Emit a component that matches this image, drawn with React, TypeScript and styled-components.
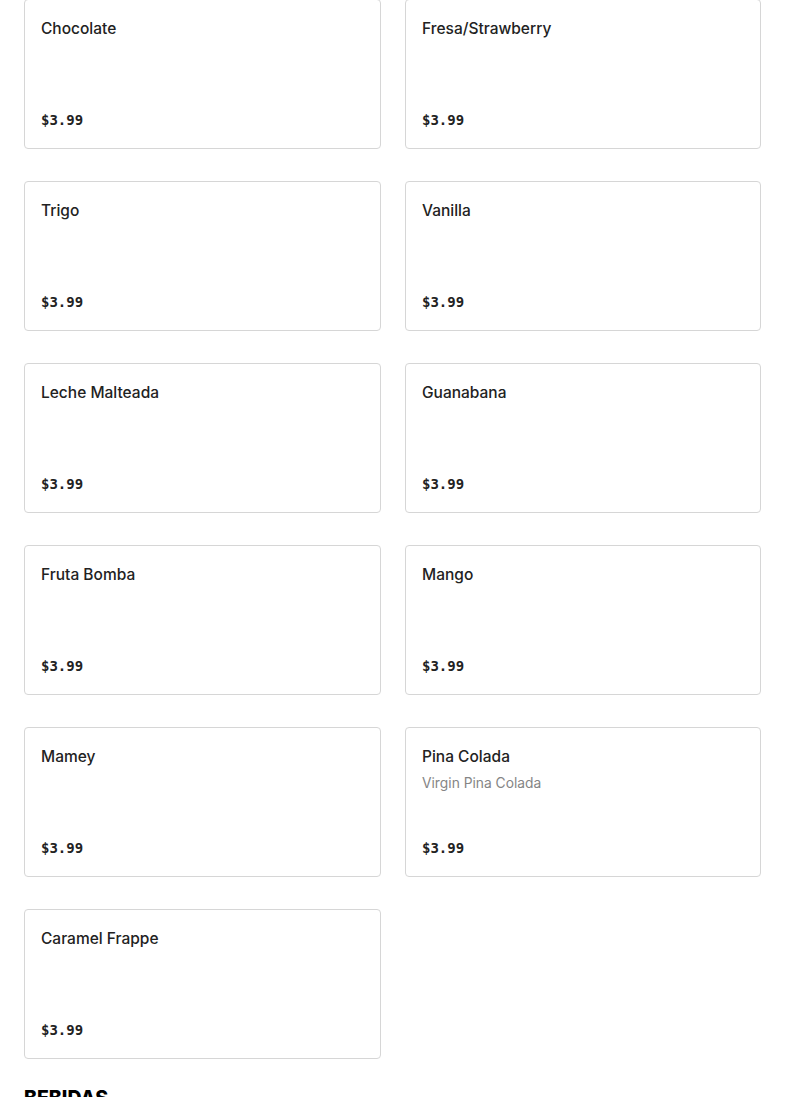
import React from "react";
import styled, { createGlobalStyle } from "styled-components";

const Global = createGlobalStyle`
  body { margin: 0; background: #fff; font-family: Inter, "Noto Sans", sans-serif; color: #1f1f1f; }
  * { box-sizing: border-box; }
`;

const Page = styled.div`
  padding: 0 24px;
  margin-top: -1px;
`;

const Grid = styled.div`
  display: grid;
  grid-template-columns: 357px 356px;
  column-gap: 24px;
  row-gap: 32px;
`;

const Card = styled.div`
  height: 150px;
  border: 1px solid #d6d6d6;
  border-radius: 4px;
  padding: 19px 16px 18px;
  display: flex;
  flex-direction: column;
`;

const Title = styled.div`
  font-size: 15.5px;
  font-weight: 500;
  line-height: 20px;
  color: #222;
`;

const Desc = styled.div`
  margin-top: 7px;
  font-size: 13.8px;
  line-height: 18px;
  color: #858585;
`;

const Price = styled.div`
  margin-top: auto;
  font-family: "DejaVu Sans Mono", "Liberation Mono", monospace;
  font-size: 14px;
  font-weight: 700;
  line-height: 20px;
  color: #222;
`;

const Heading = styled.h2`
  margin: 25px 0 0;
  font-family: Inter, sans-serif;
  font-size: 19.5px;
  font-weight: 800;
  line-height: 28px;
  color: #000;
`;

const items: { name: string; desc?: string }[] = [
  { name: "Chocolate" },
  { name: "Fresa/Strawberry" },
  { name: "Trigo" },
  { name: "Vanilla" },
  { name: "Leche Malteada" },
  { name: "Guanabana" },
  { name: "Fruta Bomba" },
  { name: "Mango" },
  { name: "Mamey" },
  { name: "Pina Colada", desc: "Virgin Pina Colada" },
  { name: "Caramel Frappe" },
];

export default function App() {
  return (
    <>
      <Global />
      <Page>
        <Grid>
          {items.map((it) => (
            <Card key={it.name}>
              <Title>{it.name}</Title>
              {it.desc && <Desc>{it.desc}</Desc>}
              <Price>$3.99</Price>
            </Card>
          ))}
        </Grid>
        <Heading>BEBIDAS</Heading>
      </Page>
    </>
  );
}
